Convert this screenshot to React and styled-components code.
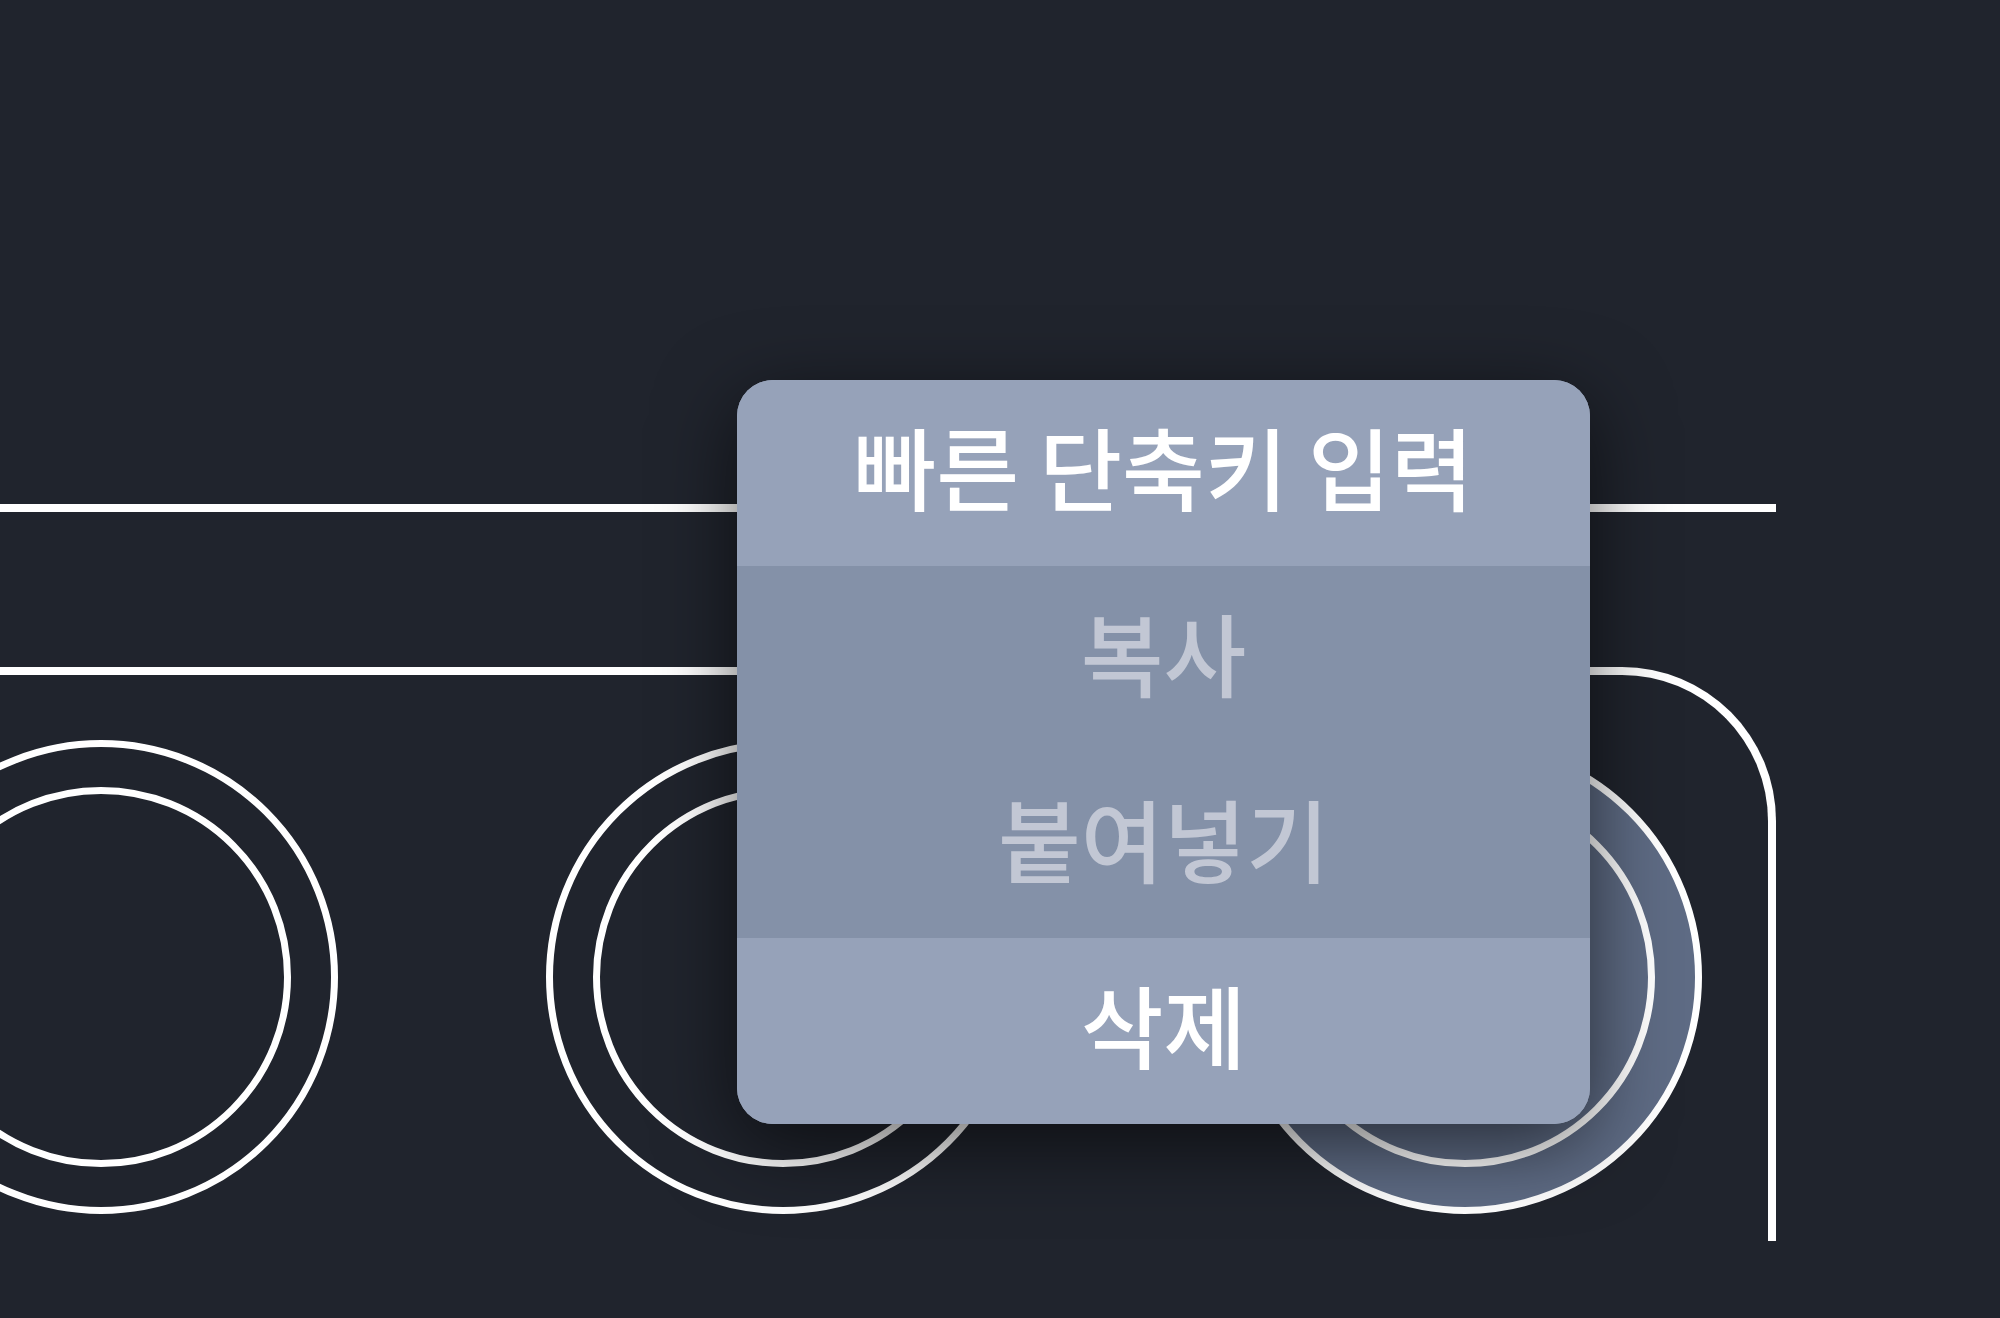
import React from "react";
import styled, { createGlobalStyle } from "styled-components";

const GlobalStyle = createGlobalStyle`
  *, *::before, *::after { box-sizing: border-box; }
  body {
    margin: 0;
    background: #20242d;
    font-family: "Noto Sans CJK KR", "Noto Sans", sans-serif;
  }
`;

const Stage = styled.main`
  position: relative;
  min-height: 100vh;
  overflow: hidden;
  padding: 504px 224px 0 0;
  background: #20242d;
`;

const Divider = styled.hr`
  margin: 0 0 155px;
  border: 0;
  border-top: 8px solid #fff;
`;

const Deck = styled.section`
  display: flex;
  justify-content: flex-end;
  gap: 208px;
  padding: 65px 66px 27px 0;
  border: solid #fff;
  border-width: 8px 8px 0 0;
  border-top-right-radius: 154px;
`;

const Key = styled.button`
  flex: none;
  width: 474px;
  height: 474px;
  padding: 40px;
  border: 7px solid #fff;
  border-radius: 50%;
  background: ${(p) => (p.$active ? "#5e6b84" : "transparent")};
`;

const KeyCap = styled.span`
  display: block;
  width: 100%;
  height: 100%;
  border: 7px solid #fff;
  border-radius: 50%;
`;

const Menu = styled.div`
  position: absolute;
  top: 380px;
  right: 410px;
  display: flex;
  flex-direction: column;
  width: 853px;
  overflow: hidden;
  border-radius: 36px;
  background: #96a2b9;
  box-shadow: 0 20px 80px rgba(0, 0, 0, 0.6);
`;

const MenuItem = styled.button`
  height: 186px;
  padding: 0 0 16px;
  border: 0;
  background: #96a2b9;
  color: #fff;
  font-family: inherit;
  font-size: 90px;
  font-weight: 500;
  line-height: 128px;
  text-align: center;
  white-space: nowrap;

  &:disabled {
    background: #8491a8;
    color: #c2c7d4;
  }
`;

const keys = [
  { id: 1, active: false },
  { id: 2, active: false },
  { id: 3, active: true },
];

const items = [
  { label: "빠른 단축키 입력" },
  { label: "복사", disabled: true },
  { label: "붙여넣기", disabled: true },
  { label: "삭제" },
];

export default function App() {
  return (
    <>
      <GlobalStyle />
      <Stage>
        <Divider />
        <Deck>
          {keys.map((key) => (
            <Key key={key.id} type="button" $active={key.active} aria-label={`키 ${key.id}`}>
              <KeyCap />
            </Key>
          ))}
        </Deck>
        <Menu role="menu">
          {items.map((item) => (
            <MenuItem key={item.label} type="button" role="menuitem" disabled={item.disabled}>
              {item.label}
            </MenuItem>
          ))}
        </Menu>
      </Stage>
    </>
  );
}
